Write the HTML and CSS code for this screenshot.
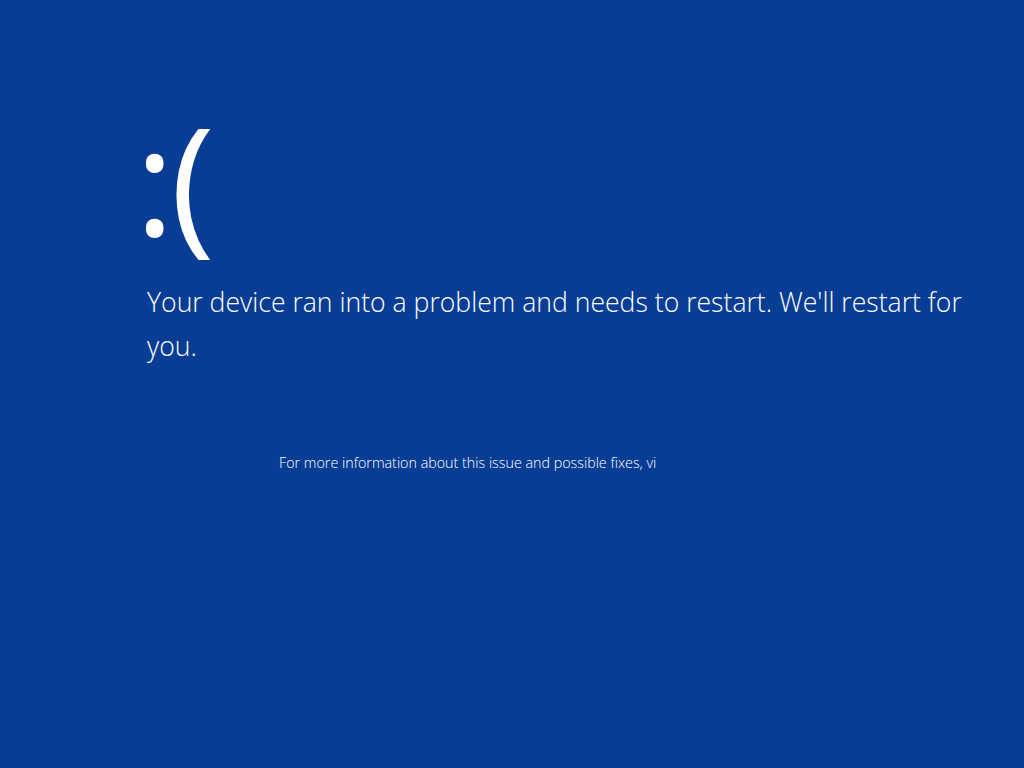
FILE: index.html
```html
<!DOCTYPE html>
<html lang="en">
<head>
<meta charset="utf-8">
<title>Your device ran into a problem</title>
<link rel="stylesheet" href="styles.css">
</head>
<body>
<main class="screen">
  <div class="face">:(</div>
  <p class="message">Your device ran into a problem and needs to restart. We'll restart for you.</p>
  <p class="info">For more information about this issue and possible fixes, vi</p>
</main>
</body>
</html>
```

FILE: styles.css
```css
html, body {
  margin: 0;
  padding: 0;
  height: 100%;
  background: #083d96;
}
.screen {
  height: 768px;
  box-sizing: border-box;
  padding: 100px 0 0 140px;
  color: #ffffff;
  font-family: "Open Sans", "Noto Sans", sans-serif;
  font-weight: 300;
}
.face {
  font-size: 150px;
  font-weight: 400;
  line-height: 180px;
  height: 180px;
  letter-spacing: -4px;
  margin-top: -12px;
  margin-left: -5px;
}
.message {
  margin: 12px 0 0;
  padding-left: 7px;
  width: 840px;
  font-size: 26.6px;
  line-height: 44px;
}
.info {
  margin: 85px 0 0 139px;
  font-size: 14.3px;
  line-height: 20px;
}
```
